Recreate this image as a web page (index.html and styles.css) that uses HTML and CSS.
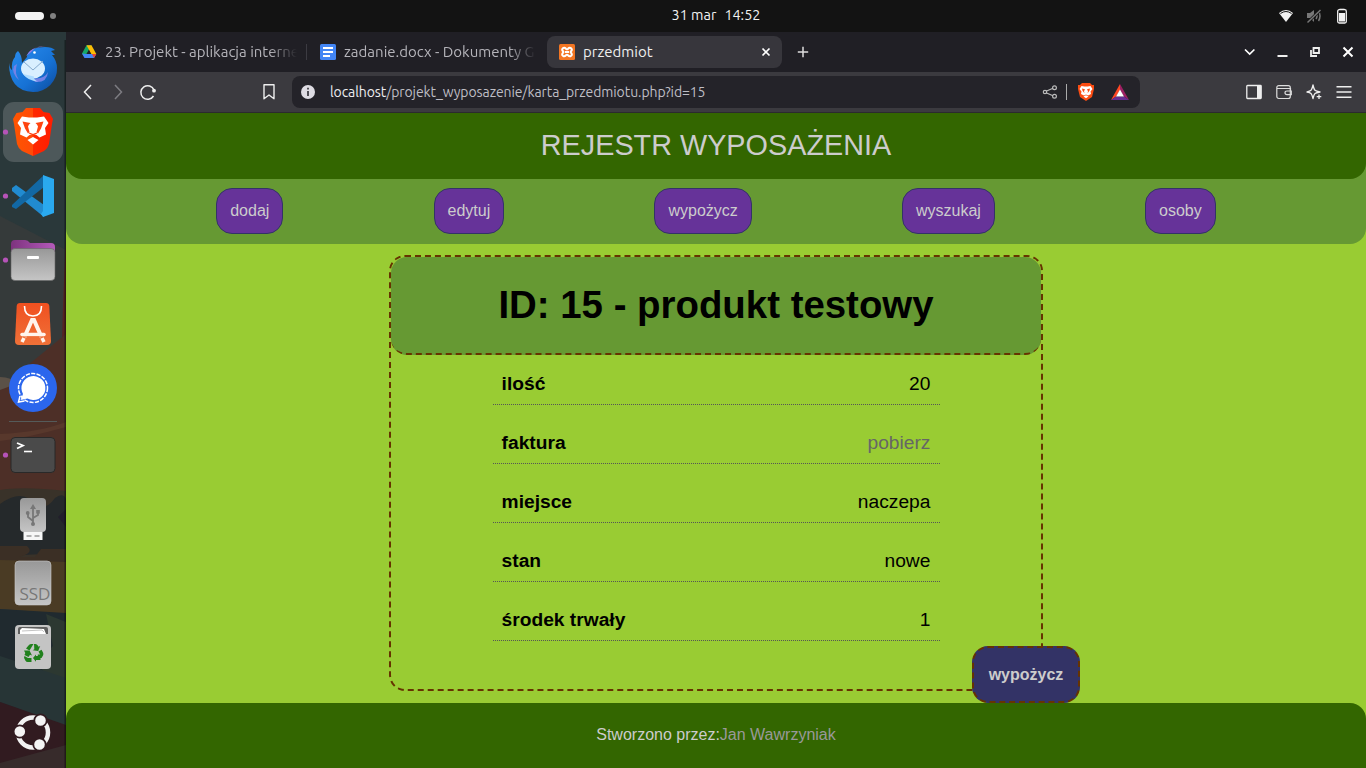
FILE: index.html
```html
<!DOCTYPE html>
<html lang="pl">
<head>
<meta charset="utf-8">
<title>przedmiot</title>
<link rel="stylesheet" href="styles.css">
</head>
<body>
<div class="panel">
  <div class="workspaces"><span class="ws-active"></span><span class="ws-dot"></span></div>
  <div class="clock"><span>31 mar</span><span>14:52</span></div>
  <div class="status">
    <svg width="16" height="16" viewBox="0 0 16 16"><path d="M1 5Q8-1 15 5L8 14Z" fill="#f2f2f2"/><path d="M2.500 5.500Q8 1.500 13.500 5.500" stroke="#131313" fill="none"/></svg>
    <svg width="16" height="16" viewBox="0 0 16 16" fill="none" stroke="#777" stroke-width="1.500"><path d="M1 5h3l4-3v12l-4-4H1z" fill="#777" stroke="none"/><path d="M10 5q2 3 0 6M12.500 3q3 5 0 10"/><path d="M1.500 14.500 14.500 2" stroke="#131313" stroke-width="3"/><path d="M1.500 14.500 14.500 2"/></svg>
    <svg width="16" height="16" viewBox="0 0 16 16"><path d="M5.500 2V.7h5V2" fill="#f2f2f2"/><rect x="3.700" y="1.700" width="8.600" height="13.300" rx="1.500" fill="none" stroke="#f2f2f2" stroke-width="1.300"/><path d="M5 5h6v8.500H5z" fill="#f2f2f2"/></svg>
  </div>
</div>
<div class="desktop">
  <aside class="dock">
    <svg class="dock-art" width="66" height="736" viewBox="0 32 66 736">
      <path d="M0 32h66v736H0z" fill="#2a383a"/>
      <path d="M0 216l66 34v100L0 390z" fill="#353a3a"/>
      <path d="M66 240v100l-4 4q1-50 4-104z" fill="#572322"/>
      <path d="M66 334L0 388v112h66z" fill="#4d2f27"/>
      <path d="M0 377q12 0 16 7L0 390z" fill="#5b5147"/>
      <path d="M0 434q40-2 66-12v5q-35 10-66 14z" fill="#58382c"/>
      <path d="M0 490q22-4 66 1v70H0z" fill="#393229"/>
      <path d="M0 504q22-16 35 0 10 8 20-6 8-6 11 1v54L0 556z" fill="#25292b"/>
      <path d="M58 517l8-8v18z" fill="#211e2b"/>
      <path d="M0 546h27q8 7-8 11h16l6-8h25v14H0z" fill="#3b2f25"/>
      <path d="M0 560l66 2v52L0 609z" fill="#4a3b24"/>
      <path d="M0 609l66 4v155H0z" fill="#202a2f"/>
      <path d="M46 614l20 8v60l-20-7q-8-7-2-20l9-9z" fill="#2c3831"/>
      <path d="M0 656l66 22v48L0 702z" fill="#273536"/>
      <path d="M0 702l66 23v23L0 768z" fill="#311b20"/>
      <path d="M0 763l66-18v23H0z" fill="#372b2b"/>
      <path d="M64.500 40H66v728h-1.500z" fill="#000" opacity=".4"/>
    </svg>
    <svg class="dock-icons" width="66" height="736" viewBox="0 32 66 736">
      <defs>
        <linearGradient id="bird" x1="0" y1="0" x2="1" y2="1"><stop offset="0" stop-color="#2a8ef0"/><stop offset=".6" stop-color="#1671d4"/><stop offset="1" stop-color="#0d499b"/></linearGradient>
        <linearGradient id="grey" x1="0" y1="0" x2="0" y2="1"><stop offset="0" stop-color="#989898"/><stop offset="1" stop-color="#c5c5c5"/></linearGradient>
        <linearGradient id="bag" x1="0" y1="0" x2="0" y2="1"><stop offset="0" stop-color="#f05020"/><stop offset="1" stop-color="#ef7138"/></linearGradient>
        <linearGradient id="lion" x1="0" x2="1"><stop offset="0" stop-color="#ff5500"/><stop offset=".5" stop-color="#ff4a08"/><stop offset=".5" stop-color="#ff2800"/><stop offset="1" stop-color="#ff1d00"/></linearGradient>
        <linearGradient id="purple" x1="0" x2="1"><stop offset="0" stop-color="#7d337e"/><stop offset="1" stop-color="#b55abb"/></linearGradient>
      </defs>
      <!-- Thunderbird -->
      <path d="M9 63q1 6 3 7-1-9 3-13 0-4 3-6 4 4 4 12l5-6q0-5 6-8 5-2 12-2 7 0 10 3l-4 1 4 4h-3q5 6 5 13A24 23 0 0 1 33 92Q9 91 9 63z" fill="url(#bird)"/>
      <path d="M26 56l4-5q8-6 16-4-9-1-13 3l-3 3z" fill="#9a78e7"/>
      <path d="M17 64q-3 9 2 16-8-7-5-14zM32 78q12 2 16-6-1 11-13 10z" fill="#7482e5"/>
      <ellipse cx="33" cy="68.500" rx="12" ry="10" fill="#d9efff"/>
      <path d="M23 74q5 7 15 7.500-5-2-4-5z" fill="#aedcff"/>
      <path d="M24 62l9 8 10-9" fill="none" stroke="#86aacd"/><circle cx="34.500" cy="52.500" r="1.300" fill="#fff"/>
      <!-- Brave -->
      <rect x="3" y="102" width="60" height="60" rx="11" fill="#4d585a"/>
      <path d="M26 108h14l3.500 4 6 1 3.500 6-1 5-3 20q-1 4-5 7l-11 5-11-5q-4-3-5-7l-3-20-1-5 3.500-6 6-1z" fill="url(#lion)"/>
      <path d="M22 116.500l7 1h8l7-1 4.500 6.500-3.500 5 1 6.500-6.500 3-3-2.500-3.500-1-3.500 1-3 2.500-6.500-3 1-6.500-3.500-5z" fill="#fff"/>
      <path d="M27.500 140l5.500-3 5.500 3-5.500 4.500z" fill="#fff"/>
      <path d="M22.500 121.500l8 1.500-1.500 1.500-1 2 1.500 5.500-1.500 1.500-3-5zM43.500 121.500l-8 1.500 1.500 1.500 1 2-1.500 5.500 1.500 1.500 3-5z" fill="#ff4410"/>
      <path d="M29 133l4 1.500 4-1.500M33 134v3" fill="none" stroke="#ff3a0a" stroke-width="1.200"/>
      <!-- VS Code -->
      <path d="M12 188l4-3 28 20v12L12 191z" fill="#218bd0"/><path d="M12 205l32-30v12L16 209l-4-2z" fill="#1268a4"/><path d="M43 175l11 4v34l-11 4-2-3 2-3z" fill="#2aa9ef"/>
      <!-- Files -->
      <path d="M11 244q0-4 4-4h10q3 0 5 3h21q4 0 4 4v9H11z" fill="url(#purple)"/>
      <rect x="11" y="248.500" width="44" height="32" rx="4" fill="url(#grey)" stroke="#666" stroke-width=".6"/><rect x="27" y="256" width="12" height="3" rx="1" fill="#fff"/>
      <!-- App center -->
      <path d="M20 303h26q3 0 3.300 3l1.700 35q0 4-4 4H19q-4 0-4-4l1.700-35q.3-3 3.300-3z" fill="url(#bag)"/>
      <path d="M24.500 306q0 10 8.500 10t8.500-10" fill="none" stroke="#fff" stroke-width="1.600"/>
      <path d="M24.500 337l7.500-17h2l7.500 17" fill="none" stroke="#fff4ec" stroke-width="4"/><path d="M22 334.500h22" stroke="#fff4ec" stroke-width="3.500" stroke-linecap="round"/><path d="M22 342l2-4m20 4-2-4" stroke="#fff4ec" stroke-width="3.500"/><path d="M23 336.800h20" stroke="#ef7138" stroke-width=".9"/>
      <!-- Signal -->
      <circle cx="33" cy="388" r="24" fill="#2b66ed"/><path d="M23 394l-2.500 6 7-1.500A12 12 0 1 0 23 394z" fill="#fff"/><circle cx="33" cy="388" r="14.500" fill="none" stroke="#fff" stroke-width="1.500" stroke-dasharray="4.200 1.300"/><path d="M20 396l-1.500 6 6-1" fill="none" stroke="#fff" stroke-width="1.500"/>
      <path d="M9 421.500h48" stroke="#555b5a"/>
      <!-- Terminal -->
      <rect x="11" y="437.500" width="44" height="35" rx="4" fill="#4a4a4a" stroke="#292929"/><path d="M17 443l6 2.500-6 3" fill="none" stroke="#fff" stroke-width="1.800"/><path d="M24 451.500h8" stroke="#fff" stroke-width="1.600"/>
      <!-- USB drive -->
      <rect x="20" y="498" width="26" height="34" rx="4" fill="url(#grey)"/><path d="M23.500 532h19v8h-19z" fill="#f7f7f7"/><path d="M26.500 536h5m3 0h5" stroke="#999" stroke-width="1.500"/>
      <path d="M33 524v-18m0 15-5-4v-3m5 4 5-3v-4" fill="none" stroke="#777" stroke-width="1.800"/><path d="M30 509l3-5 3 5z" fill="#777"/><circle cx="33" cy="524" r="2" fill="#777"/><circle cx="27.700" cy="513" r="1.900" fill="#777"/><path d="M36.200 510h3.600v3.600h-3.600z" fill="#777"/>
      <!-- SSD -->
      <rect x="15" y="561" width="36" height="44" rx="4" fill="url(#grey)" stroke="#c9c9c9" stroke-width=".6"/><text x="19.500" y="600" textLength="31" lengthAdjust="spacingAndGlyphs" class="ssd">SSD</text>
      <!-- Trash -->
      <rect x="15" y="625" width="36" height="44" rx="4" fill="#c4c4c4"/><path d="M18 634v-5q0-2 2-2h26q2 0 2 2v5z" fill="#5e5e5e"/><path d="M20 634v-4l2-2 22 1 2 5z" fill="#fff"/><path d="M22 631l20-1 2 2" fill="none" stroke="#aaa" stroke-width=".7"/>
      <g fill="#20801c">
        <path d="M28.500 645.500q.8-1.500 2.500-1.500h2.500l-4 6.500-3.500-2zM34 644h1.500q1.500 0 2.300 1.500l.7 1.200 1.700-.7-2 5-5.500-.8 1.600-1z"/>
        <path id="arrow-side" d="M38.500 651.500l3-1.800 1.500 2.800q.8 1.500 0 3l-1.500 2.500h-3.700v-3.500h2.300zM36 654.500v1.500h4.500v4H36v1.800l-3-3.800z"/>
        <path d="M24 650.500h5.500l2.500 5-2-.8-1.500 2.300-4-2 .8-2zM24.500 656l3.500 2h3.500v4h-3.800q-1.500 0-2.200-1.300l-1.200-2.200q-.6-1.200.2-2.500z"/>
      </g>
      <!-- Ubuntu -->
      <circle cx="33" cy="732.500" r="15" fill="none" stroke="#f2f2f2" stroke-width="4.500"/>
      <g fill="#f4f4f4" stroke="#311b20" stroke-width="1.800"><circle cx="19.800" cy="731.500" r="6.200"/><circle cx="40.500" cy="720.500" r="6.200"/><circle cx="39.500" cy="744.500" r="6.200"/></g>
      <g fill="#b653b8"><circle cx="5.500" cy="132" r="2.600"/><circle cx="5.500" cy="196" r="2.600"/><circle cx="5.500" cy="260" r="2.600"/><circle cx="5.500" cy="455" r="2.600"/></g>
    </svg>
  </aside>
  <div class="browser">
    <div class="tabs">
      <div class="tab tab-first">
        <svg width="16" height="16" viewBox="0 0 16 16"><path d="M5.500 1.200h5L6 9 3.500 13.500 1 9.500z" fill="#16a765"/><path d="M5.500 1.200h5L15.300 10h-5z" fill="#fbbc05"/><path d="M1 9.500 5.500 10h9.800L13 14H3.500z" fill="#4285f4"/><path d="M11 10h4.300L13 14z" fill="#ea4335"/><path d="M8 6.300 10 10H6z" fill="#201f25"/></svg>
        <span class="tab-title fade">23. Projekt - aplikacja interne</span>
      </div>
      <div class="tab tab-second">
        <svg width="16" height="16" viewBox="0 0 16 16"><rect width="16" height="16" rx="1.500" fill="#4285f4"/><path d="M3 4h10M3 8h10M3 12h7" stroke="#fff" stroke-width="1.800"/></svg>
        <span class="tab-title fade">zadanie.docx - Dokumenty G</span>
      </div>
      <div class="tab tab-active">
        <svg width="16" height="16" viewBox="0 0 16 16"><rect width="16" height="16" rx="1.500" fill="#f37623"/><path d="M4 4.200q1.500-1 3 .6 1 1 2 0 1.500-1.600 3-.6 1.700 1.500 0 3-.8.800 0 1.600 1.700 1.700 0 3-1.500 1-3-.6-1-1-2 0-1.500 1.600-3 .6-1.700-1.300 0-3 .800-.800 0-1.600-1.700-1.500 0-3zM6 8h4" fill="none" stroke="#fff" stroke-width="2"/></svg>
        <span class="tab-title">przedmiot</span>
        <svg class="tab-close" width="10" height="10" viewBox="0 0 10 10"><path d="M1.500 1.500l7 7m0-7-7 7" stroke="#fff" stroke-width="1.700"/></svg>
      </div>
      <svg class="new-tab" width="12" height="12" viewBox="0 0 12 12"><path d="M6 .8v10.400M.8 6h10.400" stroke="#ddd" stroke-width="1.500"/></svg>
      <div class="window-buttons">
        <svg width="12" height="12" viewBox="0 0 12 12"><path d="M1 3.500 5.700 8l4.700-4.500" fill="none" stroke="#fff" stroke-width="1.700"/></svg>
        <svg width="12" height="12" viewBox="0 0 12 12"><path d="M1.500 10h10" stroke="#eee" stroke-width="2"/></svg>
        <svg width="12" height="12" viewBox="0 0 12 12"><path d="M4.500 2h5.500v5H4.500zM2 4v6h6" fill="none" stroke="#eee" stroke-width="1.800"/></svg>
        <svg width="12" height="12" viewBox="0 0 12 12"><path d="M1.500 1.500l9 9m0-9-9 9" stroke="#fff" stroke-width="2"/></svg>
      </div>
    </div>
    <div class="toolbar">
      <svg class="back" width="12" height="16" viewBox="0 0 12 16"><path d="M9 1 2.500 8 9 15" fill="none" stroke="#eee" stroke-width="1.500"/></svg>
      <svg class="forward" width="12" height="16" viewBox="0 0 12 16"><path d="M3 1l6.500 7L3 15" fill="none" stroke="#7d7c82" stroke-width="1.500"/></svg>
      <svg class="reload" width="18" height="18" viewBox="0 0 18 18"><path d="M15 7A6.800 6.800 0 1 0 14.500 13" fill="none" stroke="#eee" stroke-width="1.500"/><circle cx="15" cy="7.700" r="1.900" fill="#eee"/></svg>
      <svg class="bookmark" width="14" height="18" viewBox="0 0 14 18"><path d="M2 1.800h10v14L7 12l-5 3.800z" fill="none" stroke="#eee" stroke-width="1.400" stroke-linejoin="round"/></svg>
      <div class="address">
        <svg width="14" height="14" viewBox="0 0 14 14"><circle cx="7" cy="7" r="7" fill="#dedce3"/><path d="M7 6v5M7 2.700v1.800" stroke="#37363c" stroke-width="1.700"/></svg>
        <span class="url"><b>localhost</b>/projekt_wyposazenie/karta_przedmiotu.php?id=15</span>
        <svg class="share" width="16" height="16" viewBox="0 0 16 16" fill="none" stroke="#bbb" stroke-width="1.200"><path d="M4 7.200l7-3M4 8.800l7 3"/><circle cx="3" cy="8" r="1.700"/><circle cx="12.500" cy="3.800" r="1.900"/><circle cx="12.500" cy="12.200" r="1.900"/></svg>
        <span class="divider"></span>
        <svg class="shield" width="16" height="18" viewBox="0 0 16 18"><path d="M4 0h8l2 2h2v4l-2 8-6 4-6-4L0 6V2h2z" fill="#fb4c12"/><path d="M3.500 3l3 .5h3l3-.5 2 3-2 2.500.5 2.500-3 1.500L8 11.500 6 12.500 3 11l.5-2.500L1.500 6zM5.500 13.500 8 12.300l2.500 1.200L8 15.300z" fill="#fff"/><path d="M4 5.500l3 .8-1 2 .5 2-2-2.500zM12 5.500l-3 .8 1 2-.5 2 2-2.500z" fill="#fb4c12"/></svg>
        <svg class="bat" width="18" height="16" viewBox="0 0 18 16"><path d="M9 0v6L5 12.500 0 16z" fill="#ff4724"/><path d="M9 0l9 16-5-3.500L9 6z" fill="#9e1f63"/><path d="M0 16h18l-5-3.500H5z" fill="#662d91"/><path d="M9 5.500l4 7H5z" fill="#fff"/></svg>
      </div>
      <div class="tools">
        <svg width="16" height="16" viewBox="0 0 16 16"><rect x=".8" y="1.500" width="14.400" height="13" rx=".7" fill="none" stroke="#eee" stroke-width="1.300"/><path d="M11 2h4v12h-4z" fill="#eee"/></svg>
        <svg width="16" height="16" viewBox="0 0 16 16" fill="none" stroke="#ddd" stroke-width="1.200"><rect x=".8" y="1.700" width="13.500" height="12.800" rx="2"/><path d="M1 4.500h13.500v3M15.300 7H11q-2 0-2 1.800t2 1.800h4.300z"/></svg>
        <svg width="16" height="16" viewBox="0 0 16 16" fill="none" stroke="#eee" stroke-width="1.300" stroke-linejoin="round"><path d="M7 1q1 4.500 2 5.300T14 8q-4 .7-5 1.500T7 14.500Q6 10.500 5 9.500T1 8q3-.8 4-1.700T7 1z"/><path d="M13 10.500v4.500m-2.300-2.300h4.600"/></svg>
        <svg width="16" height="16" viewBox="0 0 16 16"><path d="M.5 2.700h15M.5 8h15M.5 13.300h15" stroke="#eee" stroke-width="1.400"/></svg>
      </div>
    </div>
    <main class="page">
      <header class="site-header">REJESTR WYPOSAŻENIA</header>
      <nav class="site-nav"><a>dodaj</a><a>edytuj</a><a>wypożycz</a><a>wyszukaj</a><a>osoby</a></nav>
      <section class="content">
        <article class="card">
          <h1>ID: 15 - produkt testowy</h1>
          <dl class="details">
            <div><dt>ilość</dt><dd>20</dd></div>
            <div><dt>faktura</dt><dd class="link">pobierz</dd></div>
            <div><dt>miejsce</dt><dd>naczepa</dd></div>
            <div><dt>stan</dt><dd>nowe</dd></div>
            <div><dt>środek trwały</dt><dd>1</dd></div>
          </dl>
          <a class="borrow">wypożycz</a>
        </article>
      </section>
      <footer class="site-footer">Stworzono przez:<a>Jan Wawrzyniak</a></footer>
    </main>
  </div>
</div>
</body>
</html>
```
FILE: styles.css
```css
* { box-sizing: border-box; }
body { margin: 0; width: 1366px; height: 768px; overflow: hidden; display: flex; flex-direction: column; font-family: "Liberation Sans", Arial, sans-serif; }
svg { display: block; flex: none; }
.panel, .browser { font-family: Ubuntu, "Noto Sans", sans-serif; }
.panel { height: 32px; background: #131313; color: #f2f2f2; display: grid; grid-template-columns: 66px 1fr auto 1fr; align-items: center; }
.workspaces { display: flex; align-items: center; gap: 6px; padding-left: 15px; }
.ws-active { width: 29px; height: 8px; border-radius: 4px; background: #f4f4f4; }
.ws-dot { width: 6px; height: 6px; border-radius: 3px; background: #818181; }
.clock { grid-column: 3; display: flex; gap: 8px; font-size: 14.4px; line-height: 20px; padding-bottom: 2px; }
.status { display: flex; justify-content: flex-end; gap: 12px; padding-right: 16px; }
.desktop { display: flex; height: 736px; }
.dock { width: 66px; display: grid; }
.dock-art, .dock-icons { grid-area: 1 / 1; }
.ssd { font: 16.5px Ubuntu, "Noto Sans", sans-serif; fill: #777; }
.browser { width: 1300px; display: flex; flex-direction: column; }
.tabs { height: 40px; background: #201f25; display: flex; align-items: center; color: #b5b4ba; }
.tab { height: 32px; display: flex; align-items: center; font-size: 15px; }
.tab-first { width: 241px; padding-left: 15px; gap: 8px; }
.tab-first .tab-title { width: 192px; }
.tab-first::after { content: ""; width: 1px; height: 16px; background: #3c3b42; margin-left: 1px; }
.tab-second { width: 240px; padding-left: 13px; gap: 8px; }
.tab-second .tab-title { width: 192px; }
.tab-title { padding-bottom: 2px; }
.fade { white-space: nowrap; -webkit-mask-image: linear-gradient(90deg, #000 165px, transparent 192px); mask-image: linear-gradient(90deg, #000 165px, transparent 192px); }
.tab-active { width: 235px; background: #37363c; color: #eee; border-radius: 8px; padding: 0 11px 0 12px; gap: 8px; }
.tab-close { margin-left: auto; }
.new-tab { margin-left: 15px; }
.window-buttons { margin-left: auto; display: flex; gap: 20.8px; padding-right: 12px; }
.toolbar { height: 41px; background: #3b3a3f; border-bottom: 1px solid #2b2a2e; display: flex; align-items: center; }
.back { margin-left: 16px; }
.forward { margin-left: 18px; }
.reload { margin-left: 15px; }
.bookmark { margin-left: 105px; }
.address { width: 848px; height: 32px; margin-left: 16px; border-radius: 8px; background: #242329; padding: 0 11px 0 9px; display: flex; align-items: center; }
.url { margin-left: 15px; font-size: 14px; letter-spacing: -.09px; color: #bfbec5; white-space: nowrap; }
.url b { font-weight: 400; color: #ededf0; }
.share { margin-left: auto; }
.divider { width: 1px; height: 16px; background: #aaa; margin: 0 11px 0 8px; }
.bat { margin-left: 17px; }
.tools { margin-left: auto; display: flex; gap: 14px; padding-right: 14px; }
.page { height: 655px; background: #9c3; font-family: "Liberation Sans", Arial, sans-serif; display: flex; flex-direction: column; }
.site-header { position: relative; z-index: 1; height: 66px; line-height: 64px; text-align: center; font-size: 28.8px; color: #ccc; background: #360; border-radius: 0 0 16px 16px; }
.site-nav { height: 81px; margin-top: -16px; background: #693; border-radius: 0 0 16px 16px; display: flex; justify-content: space-evenly; padding-top: 25px; }
.site-nav a { height: 46px; line-height: 44px; padding: 0 13px; border: 1px solid #336; border-radius: 16px; background: #639; color: #ccc; font-size: 16px; }
.content { height: 459px; padding-top: 11px; display: flex; justify-content: center; align-items: flex-start; }
.card { position: relative; width: 654px; height: 436px; border: 2px dashed #630; border-radius: 16px; }
h1 { margin: 0; height: 98px; line-height: 96px; font-size: 38.4px; text-align: center; background: #693; border-bottom: 2px dashed #630; border-radius: 16px; }
.details { margin: 0 101px 0 102px; font-size: 19.2px; }
.details div { height: 50px; border-bottom: 1px dotted #555; display: flex; justify-content: space-between; padding: 18px 9.6px 0 8.6px; line-height: 22px; }
.details div + div { margin-top: 9px; }
dt { font-weight: 700; }
dd { margin: 0; }
.link { color: #666; }
.borrow { position: absolute; right: -39px; bottom: -14px; width: 108px; height: 57px; line-height: 53px; text-align: center; font-size: 16px; font-weight: 700; color: #ccc; background: #336; border: 2px dashed #630; border-radius: 16px; }
.site-footer { height: 65px; line-height: 64px; text-align: center; background: #360; color: #ccc; border-radius: 16px 16px 0 0; font-size: 16px; }
.site-footer a { color: #999; }
```
